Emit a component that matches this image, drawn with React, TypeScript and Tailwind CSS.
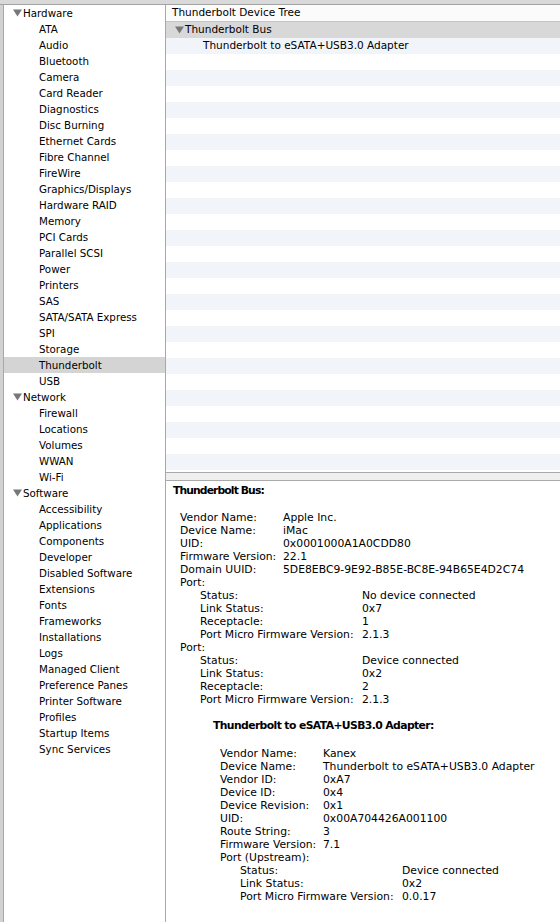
import React from "react";

const hardware = [
  "ATA", "Audio", "Bluetooth", "Camera", "Card Reader", "Diagnostics", "Disc Burning",
  "Ethernet Cards", "Fibre Channel", "FireWire", "Graphics/Displays", "Hardware RAID",
  "Memory", "PCI Cards", "Parallel SCSI", "Power", "Printers", "SAS", "SATA/SATA Express",
  "SPI", "Storage", "Thunderbolt", "USB",
];
const network = ["Firewall", "Locations", "Volumes", "WWAN", "Wi-Fi"];
const software = [
  "Accessibility", "Applications", "Components", "Developer", "Disabled Software",
  "Extensions", "Fonts", "Frameworks", "Installations", "Logs", "Managed Client",
  "Preference Panes", "Printer Software", "Profiles", "Startup Items", "Sync Services",
];

function Tri() {
  return (
    <svg width="9" height="8" viewBox="0 0 9 8" className="shrink-0">
      <polygon points="0,0.5 9,0.5 4.5,7.5" fill="#777777" />
    </svg>
  );
}

function Group({ title, items }: { title: string; items: string[] }) {
  return (
    <>
      <div className="h-[16px] flex items-center pl-[9px] gap-[1px]">
        <Tri />
        <span>{title}</span>
      </div>
      {items.map((it) => (
        <div
          key={it}
          className={
            "h-[16px] flex items-center pl-[35px] " +
            (it === "Thunderbolt" ? "bg-[#d4d4d4]" : "")
          }
        >
          {it}
        </div>
      ))}
    </>
  );
}

type Row = { l: string; v?: string };

function Rows({ rows, col }: { rows: Row[]; col: string }) {
  return (
    <>
      {rows.map((r, i) => (
        <div key={i} className="flex h-[13px] items-center whitespace-nowrap">
          <span className={col + " shrink-0"}>{r.l}</span>
          {r.v !== undefined && <span>{r.v}</span>}
        </div>
      ))}
    </>
  );
}

export default function App() {
  const treeRows = Array.from({ length: 28 });
  return (
    <div className="w-[560px] h-[922px] overflow-hidden flex flex-col bg-[#d9d9d9] text-black font-['DejaVu_Sans',sans-serif] text-[10.3px]">
      <div className="h-[5px] shrink-0 bg-[#d9d9d9] border-b border-[#a3a3a3]" />
      <div className="flex flex-1 min-h-0">
        <div className="w-[4px] shrink-0 bg-[#d2d2d2] border-r border-[#a8a8a8]" />
        <div className="w-[162px] shrink-0 bg-white border-r border-[#a8a8a8] leading-[16px]">
          <Group title="Hardware" items={hardware} />
          <Group title="Network" items={network} />
          <Group title="Software" items={software} />
        </div>
        <div className="flex-1 flex flex-col bg-white min-w-0">
          <div className="h-[467px] shrink-0 flex flex-col overflow-hidden text-[10.5px]">
            <div className="h-[17px] shrink-0 bg-[#fbfbfb] border-b border-[#c4c4c4] flex items-center pl-[6px]">
              Thunderbolt Device Tree
            </div>
            <div className="h-[16px] shrink-0 bg-[#d8d8d8] flex items-center pl-[9px] gap-[1px]">
              <Tri />
              <span>Thunderbolt Bus</span>
            </div>
            {treeRows.map((_, i) => (
              <div
                key={i}
                className={
                  "h-[16px] shrink-0 flex items-center pl-[37px] " +
                  (i % 2 === 0 ? "bg-[#f1f5fa]" : "bg-white")
                }
              >
                {i === 0 ? "Thunderbolt to eSATA+USB3.0 Adapter" : ""}
              </div>
            ))}
          </div>
          <div className="h-[9px] shrink-0 bg-[#efefef] border-t border-b border-[#a9a9a9]" />
          <div className="flex-1 bg-white pt-[4px] pl-[7px] text-[10.8px]">
            <div className="h-[13px] flex items-center font-bold tracking-[-0.9px]">Thunderbolt Bus:</div>
            <div className="h-[14px]" />
            <div className="pl-[7px]">
              <Rows
                col="w-[103px]"
                rows={[
                  { l: "Vendor Name:", v: "Apple Inc." },
                  { l: "Device Name:", v: "iMac" },
                  { l: "UID:", v: "0x0001000A1A0CDD80" },
                  { l: "Firmware Version:", v: "22.1" },
                  { l: "Domain UUID:", v: "5DE8EBC9-9E92-B85E-BC8E-94B65E4D2C74" },
                  { l: "Port:" },
                ]}
              />
              <div className="pl-[20px]">
                <Rows
                  col="w-[162px]"
                  rows={[
                    { l: "Status:", v: "No device connected" },
                    { l: "Link Status:", v: "0x7" },
                    { l: "Receptacle:", v: "1" },
                    { l: "Port Micro Firmware Version:", v: "2.1.3" },
                  ]}
                />
              </div>
              <Rows col="w-[103px]" rows={[{ l: "Port:" }]} />
              <div className="pl-[20px]">
                <Rows
                  col="w-[162px]"
                  rows={[
                    { l: "Status:", v: "Device connected" },
                    { l: "Link Status:", v: "0x2" },
                    { l: "Receptacle:", v: "2" },
                    { l: "Port Micro Firmware Version:", v: "2.1.3" },
                  ]}
                />
              </div>
              <div className="h-[13px]" />
              <div className="pl-[33px]">
                <div className="h-[13px] flex items-center font-bold tracking-[-0.6px] whitespace-nowrap">
                  Thunderbolt to eSATA+USB3.0 Adapter:
                </div>
                <div className="h-[15px]" />
                <div className="pl-[7px]">
                  <Rows
                    col="w-[103px]"
                    rows={[
                      { l: "Vendor Name:", v: "Kanex" },
                      { l: "Device Name:", v: "Thunderbolt to eSATA+USB3.0 Adapter" },
                      { l: "Vendor ID:", v: "0xA7" },
                      { l: "Device ID:", v: "0x4" },
                      { l: "Device Revision:", v: "0x1" },
                      { l: "UID:", v: "0x00A704426A001100" },
                      { l: "Route String:", v: "3" },
                      { l: "Firmware Version:", v: "7.1" },
                      { l: "Port (Upstream):" },
                    ]}
                  />
                  <div className="pl-[20px]">
                    <Rows
                      col="w-[162px]"
                      rows={[
                        { l: "Status:", v: "Device connected" },
                        { l: "Link Status:", v: "0x2" },
                        { l: "Port Micro Firmware Version:", v: "0.0.17" },
                      ]}
                    />
                  </div>
                </div>
              </div>
            </div>
          </div>
        </div>
      </div>
    </div>
  );
}
